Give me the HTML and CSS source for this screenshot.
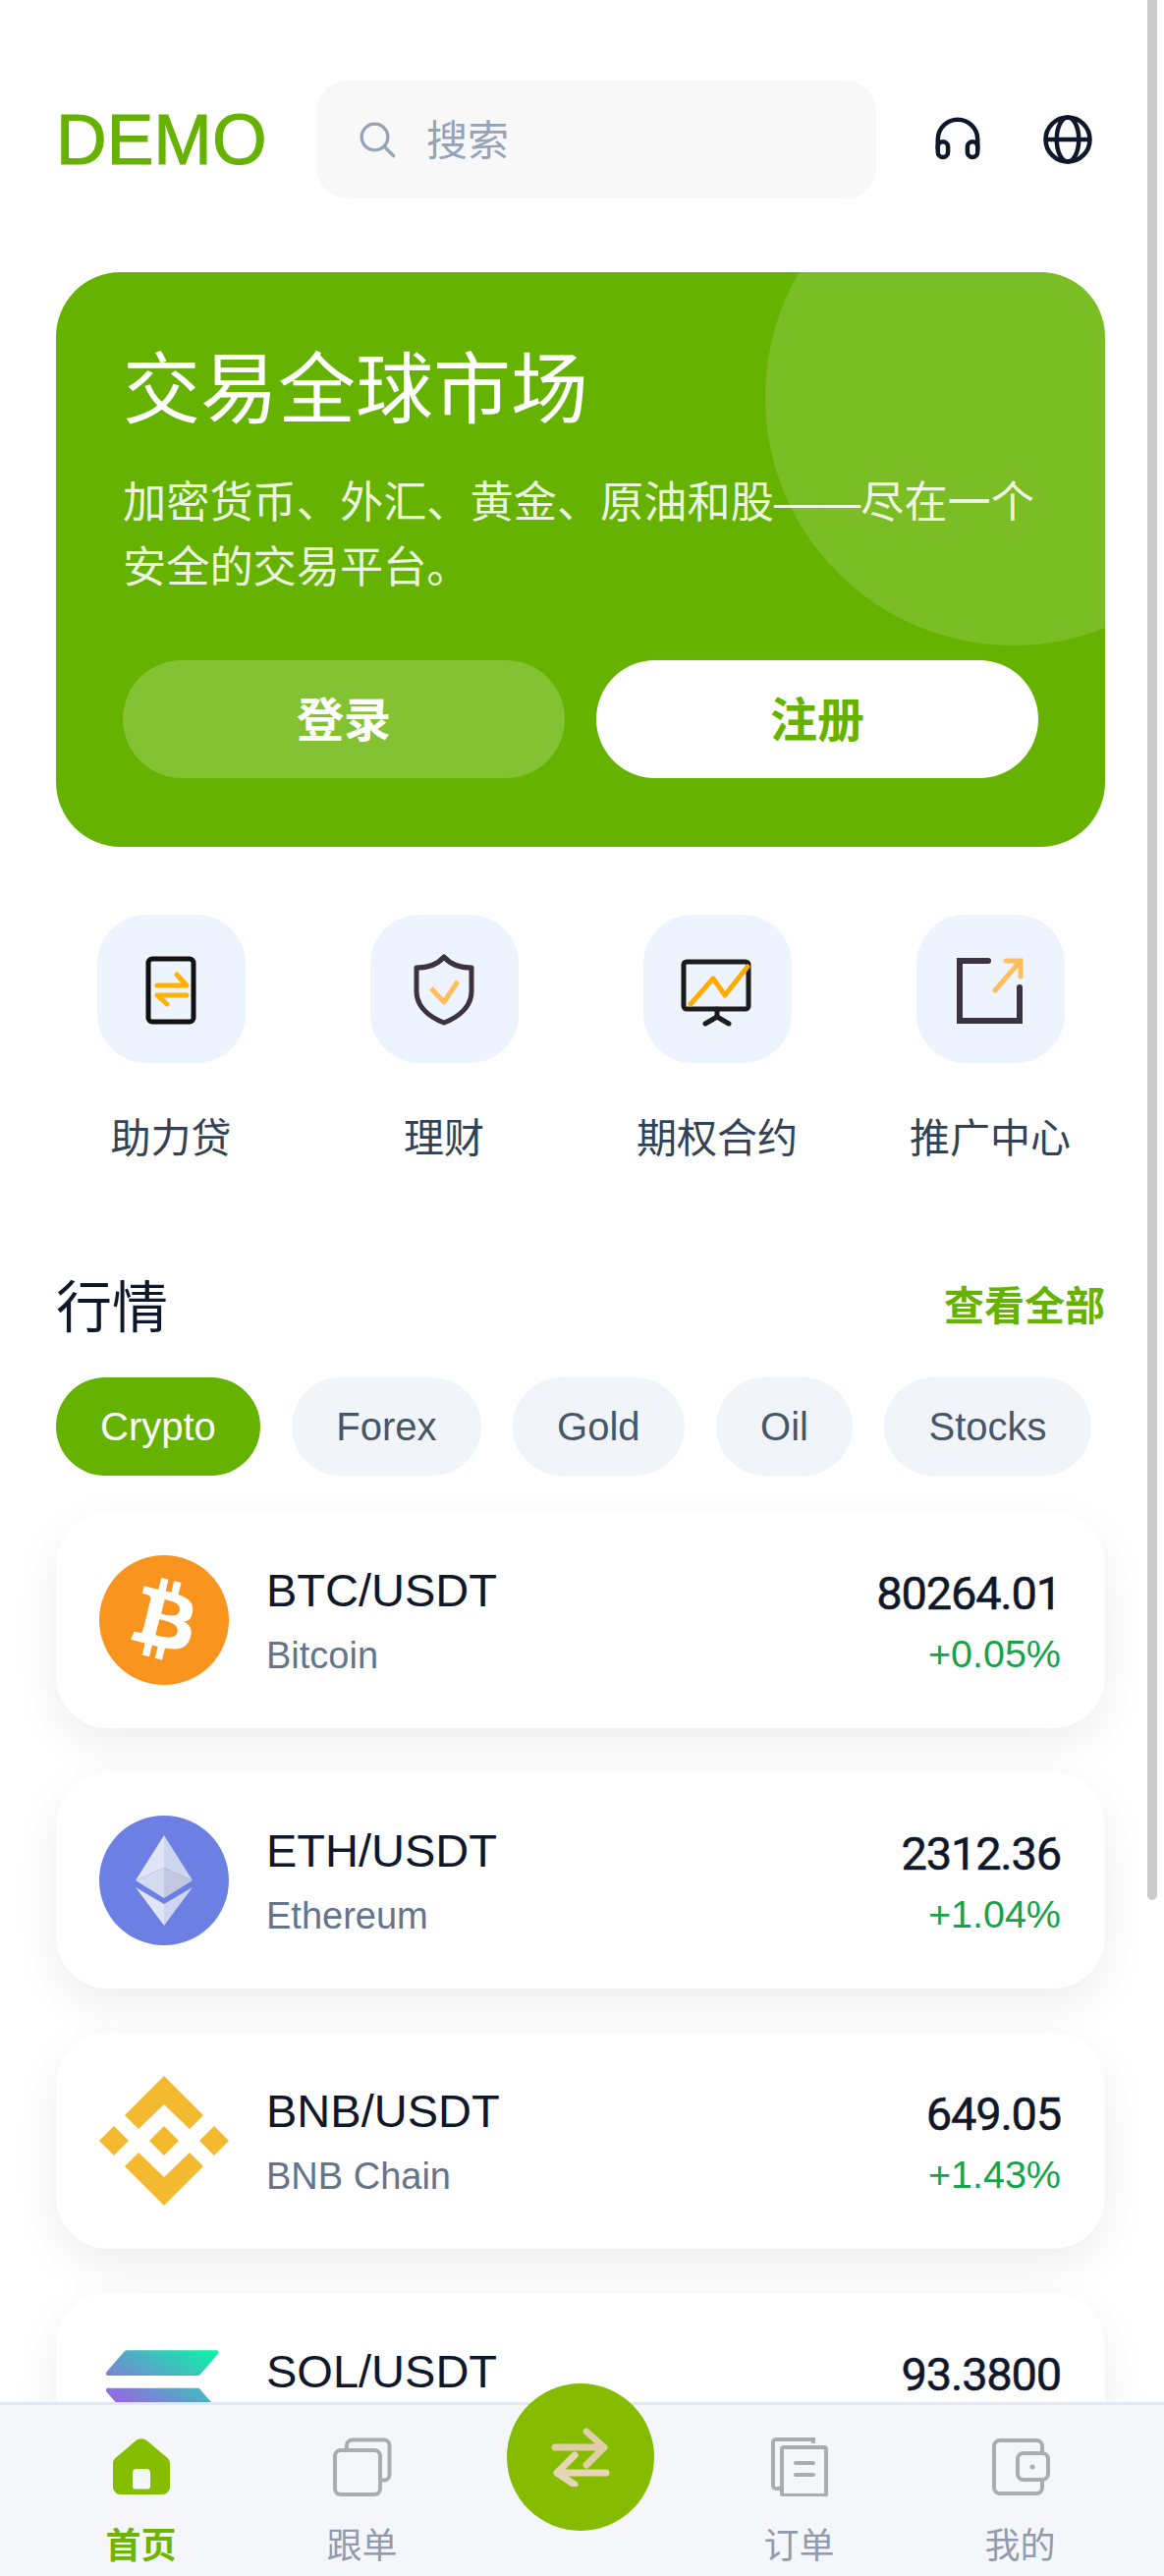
FILE: index.html
```html
<!DOCTYPE html>
<html lang="zh-CN">
<head>
    <meta charset="UTF-8">
    <meta name="viewport" content="width=device-width, initial-scale=1.0">
    <title>DEMO</title>
    <link rel="stylesheet" href="styles.css">
</head>
<body>
    <div class="page">
        <!-- Header -->
        <header class="top-bar">
            <div class="logo">DEMO</div>
            <div class="search-box">
                <svg class="search-icon" viewBox="0 0 24 24" fill="none" stroke="#94a3b8" stroke-width="2" stroke-linecap="round"><circle cx="10.5" cy="10.5" r="8"/><path d="M16.5 16.5L22 22"/></svg>
                <span>搜索</span>
            </div>
            <svg class="top-icon" viewBox="0 0 24 24" fill="none" stroke="#0f172a" stroke-width="2" stroke-linecap="round"><path d="M3 16v-4a9 9 0 0 1 18 0v4"/><rect x="3" y="13" width="4.6" height="7" rx="2.3"/><rect x="16.4" y="13" width="4.6" height="7" rx="2.3"/></svg>
            <svg class="top-icon" viewBox="0 0 24 24" fill="none" stroke="#0f172a" stroke-width="2"><circle cx="12" cy="12" r="10"/><ellipse cx="12" cy="12" rx="5" ry="10"/><path d="M2 12h20"/></svg>
        </header>

        <!-- Hero banner -->
        <section class="hero">
            <div class="hero-circle"></div>
            <h1 class="hero-title">交易全球市场</h1>
            <p class="hero-text">加密货币、外汇、黄金、原油和股——尽在一个安全的交易平台。</p>
            <div class="hero-buttons">
                <div class="hero-button login">登录</div>
                <div class="hero-button register">注册</div>
            </div>
        </section>

        <!-- Shortcuts -->
        <section class="shortcuts">
            <div class="shortcut">
                <div class="shortcut-icon">
                    <svg viewBox="0 0 80 80" fill="none" stroke-width="5" stroke-linecap="round" stroke-linejoin="round"><rect x="17" y="9" width="46" height="64" rx="4" stroke="#111"/><path d="M26 36h30L46 25M56 46H26l10 9" stroke="#ffb300"/></svg>
                </div>
                <div class="shortcut-label">助力贷</div>
            </div>
            <div class="shortcut">
                <div class="shortcut-icon">
                    <svg viewBox="0 0 80 80" fill="none" stroke-width="5" stroke-linejoin="round"><path d="M40 7c6 7 16 11 28 11v24c0 15-12 26-28 32C24 68 12 57 12 42V18c12 0 22-4 28-11z" stroke="#3d3242"/><path d="M27 39l13 14 14-21" stroke="#ffbe5c"/></svg>
                </div>
                <div class="shortcut-label">理财</div>
            </div>
            <div class="shortcut">
                <div class="shortcut-icon">
                    <svg viewBox="0 0 80 80" fill="none" stroke-width="5" stroke-linecap="round" stroke-linejoin="round"><rect x="6" y="12" width="66" height="48" rx="3" stroke="#1c1c1c"/><path d="M40 60v8M28 75l12-7 12 7" stroke="#1c1c1c"/><path d="M13 55l23-26 12 17 23-29" stroke="#ffab00"/></svg>
                </div>
                <div class="shortcut-label">期权合约</div>
            </div>
            <div class="shortcut">
                <div class="shortcut-icon">
                    <svg viewBox="0 0 80 80" fill="none" stroke-width="6" stroke-linecap="round"><path d="M38 11H9v61h61V38" stroke="#3d3242"/><path d="M45 41l25-29M56 11h15v16" stroke="#ffbe5c" stroke-width="5"/></svg>
                </div>
                <div class="shortcut-label">推广中心</div>
            </div>
        </section>

        <!-- Markets -->
        <section class="market">
            <div class="market-head">
                <h2 class="market-title">行情</h2>
                <div class="market-more">查看全部</div>
            </div>
            <div class="tabs">
                <div class="tab active">Crypto</div>
                <div class="tab">Forex</div>
                <div class="tab">Gold</div>
                <div class="tab">Oil</div>
                <div class="tab">Stocks</div>
            </div>

            <div class="coin-card">
                <svg class="coin-logo" viewBox="0 0 64 64"><circle cx="32" cy="32" r="32" fill="#f9951e"/><path fill="#fff" d="M46.103,27.444c0.637-4.258-2.605-6.547-7.038-8.074l1.438-5.768l-3.511-0.875l-1.4,5.616c-0.923-0.23-1.871-0.447-2.813-0.662l1.41-5.653l-3.509-0.875l-1.439,5.766c-0.764-0.174-1.514-0.346-2.242-0.527l0.004-0.018l-4.842-1.209l-0.934,3.75c0,0,2.605,0.597,2.55,0.634c1.422,0.355,1.679,1.296,1.636,2.042l-1.638,6.571c0.098,0.025,0.225,0.061,0.365,0.117c-0.117-0.029-0.242-0.061-0.371-0.092l-2.296,9.205c-0.174,0.432-0.615,1.08-1.609,0.834c0.035,0.051-2.552-0.637-2.552-0.637l-1.743,4.019l4.569,1.139c0.85,0.213,1.683,0.436,2.503,0.646l-1.453,5.834l3.507,0.875l1.439-5.772c0.958,0.26,1.888,0.5,2.798,0.726l-1.434,5.745l3.511,0.875l1.453-5.823c5.987,1.133,10.489,0.676,12.384-4.739c1.527-4.36-0.076-6.875-3.226-8.515C44.008,32.894,45.643,31.4,46.103,27.444z M38.58,37.994c-1.085,4.36-8.426,2.003-10.806,1.412l1.928-7.729C32.082,32.27,39.716,33.445,38.58,37.994z M39.666,27.385c-0.99,3.966-7.1,1.951-9.082,1.457l1.748-7.01C34.314,22.326,40.698,23.247,39.666,27.385z"/></svg>
                <div class="coin-info">
                    <div class="coin-pair">BTC/USDT</div>
                    <div class="coin-name">Bitcoin</div>
                </div>
                <div class="coin-quote">
                    <div class="coin-price">80264.01</div>
                    <div class="coin-change">+0.05%</div>
                </div>
            </div>

            <div class="coin-card">
                <svg class="coin-logo" viewBox="0 0 132 132"><circle cx="66" cy="66" r="66" fill="#6b80e2"/><path fill="#dfe4f7" d="M66 20L37 66l29-13z"/><path fill="#ced5ee" d="M66 20l29 46-29-13z"/><path fill="#d4daf0" d="M37 66l29 18V53z"/><path fill="#c1c8e0" d="M95 66L66 84V53z"/><path fill="#dfe4f7" d="M37 73l29 39V90z"/><path fill="#ced5ee" d="M95 73l-29 39V90z"/></svg>
                <div class="coin-info">
                    <div class="coin-pair">ETH/USDT</div>
                    <div class="coin-name">Ethereum</div>
                </div>
                <div class="coin-quote">
                    <div class="coin-price">2312.36</div>
                    <div class="coin-change">+1.04%</div>
                </div>
            </div>

            <div class="coin-card">
                <svg class="coin-logo" viewBox="0 0 132 132" fill="#f3ba2f"><path d="M66 0l40 40-14 14-26-25-26 25-14-14z"/><path d="M66 132l40-40-14-14-26 25-26-25-14 14z"/><path d="M66 51l15 15-15 15-15-15z"/><path d="M15 51l15 15-15 15L0 66z"/><path d="M117 51l15 15-15 15-15-15z"/></svg>
                <div class="coin-info">
                    <div class="coin-pair">BNB/USDT</div>
                    <div class="coin-name">BNB Chain</div>
                </div>
                <div class="coin-quote">
                    <div class="coin-price">649.05</div>
                    <div class="coin-change">+1.43%</div>
                </div>
            </div>

            <div class="coin-card">
                <svg class="coin-logo" viewBox="-24 -43 458 397.7" preserveAspectRatio="none">
                    <defs><linearGradient id="solGrad" gradientUnits="userSpaceOnUse" x1="360.88" y1="-37.46" x2="141.21" y2="383.29"><stop offset="0" stop-color="#00ffa3"/><stop offset="1" stop-color="#dc1fff"/></linearGradient></defs>
                    <path fill="url(#solGrad)" d="M64.6 237.9c2.4-2.4 5.7-3.8 9.2-3.8h317.4c5.8 0 8.7 7 4.6 11.1l-62.7 62.7c-2.4 2.4-5.7 3.8-9.2 3.8H6.5c-5.8 0-8.7-7-4.6-11.1l62.7-62.7z"/>
                    <path fill="url(#solGrad)" d="M64.6 3.8C67.1 1.4 70.4 0 73.8 0h317.4c5.8 0 8.7 7 4.6 11.1l-62.7 62.7c-2.4 2.4-5.7 3.8-9.2 3.8H6.5c-5.8 0-8.7-7-4.6-11.1L64.6 3.8z"/>
                    <path fill="url(#solGrad)" d="M333.1 120.1c-2.4-2.4-5.7-3.8-9.2-3.8H6.5c-5.8 0-8.7 7-4.6 11.1l62.7 62.7c2.4 2.4 5.7 3.8 9.2 3.8h317.4c5.8 0 8.7-7 4.6-11.1l-62.7-62.7z"/>
                </svg>
                <div class="coin-info">
                    <div class="coin-pair">SOL/USDT</div>
                    <div class="coin-name">Solana</div>
                </div>
                <div class="coin-quote">
                    <div class="coin-price">93.3800</div>
                    <div class="coin-change">+0.87%</div>
                </div>
            </div>
        </section>
    </div>

    <div class="scroll-thumb"></div>

    <!-- Bottom nav -->
    <nav class="bottom-nav">
        <div class="nav-item active">
            <svg class="nav-icon" viewBox="0 0 60 60"><path fill="#85bd00" fill-rule="evenodd" d="M24 3.500c3.500-3 8.500-3 12 0l20 17c2 1.700 3 3.500 3 6V50c0 4.500-3.500 8-8 8H9c-4.500 0-8-3.500-8-8V26.500c0-2.500 1-4.300 3-6zM25 32c-2.500 0-4 1.500-4 4v14c0 1.500 1 2.500 2.500 2.500h13c1.500 0 2.500-1 2.500-2.500V36c0-2.500-1.500-4-4-4z"/></svg>
            <span>首页</span>
        </div>
        <div class="nav-item">
            <svg class="nav-icon" viewBox="0 0 60 60" fill="none" stroke="#aaacaf" stroke-width="4"><rect x="2" y="13" width="46" height="45" rx="6"/><path d="M14 12V8c0-3 2.500-5.500 5.500-5.500H52c3 0 5.500 2.500 5.500 5.500v30c0 3-2.500 5.500-5.500 5.500h-4"/></svg>
            <span>跟单</span>
        </div>
        <div class="nav-center">
            <div class="trade-button">
                <svg viewBox="0 0 60 60" fill="none" stroke-width="7" stroke-linecap="round" stroke-linejoin="round"><path d="M4 20h50M36 4l18 16-18 18" stroke="#dfcea8"/><path d="M56 46H6M24 28L6 46l18 12" stroke="#e6d6b7"/></svg>
            </div>
        </div>
        <div class="nav-item">
            <svg class="nav-icon" viewBox="0 0 60 60" fill="none" stroke="#aaacaf" stroke-width="4"><path d="M44 6V2H6a3 3 0 0 0-3 3v44a3 3 0 0 0 3 3h5"/><rect x="12" y="10" width="45" height="49" rx="2"/><path d="M26 26h18M26 38h18" stroke-linecap="round"/></svg>
            <span>订单</span>
        </div>
        <div class="nav-item">
            <svg class="nav-icon" viewBox="0 0 60 60" fill="none" stroke="#aaacaf" stroke-width="4"><path d="M52 16V9a6 6 0 0 0-6-6H9a6 6 0 0 0-6 6v42a6 6 0 0 0 6 6h37a6 6 0 0 0 6-6v-8"/><rect x="27" y="16" width="31" height="27" rx="6"/><circle cx="42" cy="30" r="2.500" fill="#aaacaf" stroke="none"/></svg>
            <span>我的</span>
        </div>
    </nav>
</body>
</html>
```

FILE: styles.css
```css
* {
    box-sizing: border-box;
}

body {
    font-family: "Liberation Sans", "Noto Sans CJK SC", sans-serif;
    background-color: #fff;
    margin: 0;
    padding: 0;
    width: 1185px;
    height: 2622px;
    position: relative;
    overflow: hidden;
}

h1, h2, p {
    margin: 0;
    font-weight: normal;
}

.page {
    width: 1168px;
    height: 2622px;
    overflow: hidden;
    padding: 82px 43px 0 57px;
}

/* header */
.top-bar {
    display: flex;
    align-items: center;
    height: 120px;
}

.logo {
    width: 265px;
    font-size: 71.5px;
    color: #65b300;
    -webkit-text-stroke: 1px #65b300;
}

.search-box {
    display: flex;
    align-items: center;
    width: 570px;
    height: 120px;
    padding-left: 42px;
    margin-right: 56px;
    background-color: #f8f8f8;
    border-radius: 32px;
    font-size: 42px;
    color: #94a3b8;
}

.search-box span {
    padding-bottom: 6px;
}

.search-icon {
    width: 40px;
    height: 40px;
    margin-right: 30px;
}

.top-icon {
    width: 54px;
    height: 54px;
    margin-right: 58px;
}

.top-icon:last-child {
    margin-right: 0;
}

/* hero */
.hero {
    position: relative;
    overflow: hidden;
    height: 585px;
    margin-top: 75px;
    padding: 71px 68px 0;
    background-color: #65b300;
    border-radius: 66px;
    color: #fff;
}

.hero-circle {
    position: absolute;
    left: 722px;
    top: -125px;
    width: 505px;
    height: 505px;
    border-radius: 50%;
    background-color: rgba(255, 255, 255, 0.14);
}

.hero-title {
    position: relative;
    font-size: 79px;
    line-height: 100px;
}

.hero-text {
    position: relative;
    margin-top: 31px;
    font-size: 44.2px;
    line-height: 66px;
    color: rgba(255, 255, 255, 0.9);
}

.hero-buttons {
    position: relative;
    display: flex;
    gap: 32px;
    margin-top: 61px;
}

.hero-button {
    width: 450px;
    height: 120px;
    border-radius: 60px;
    font-size: 48px;
    font-weight: bold;
    line-height: 124px;
    text-align: center;
}

.login {
    background-color: rgba(255, 255, 255, 0.2);
    color: #fff;
}

.register {
    background-color: #fff;
    color: #65b300;
}

/* shortcuts */
.shortcuts {
    display: flex;
    justify-content: space-between;
    margin-top: 69px;
}

.shortcut {
    width: 234px;
    text-align: center;
}

.shortcut-icon {
    display: flex;
    align-items: center;
    justify-content: center;
    width: 151px;
    height: 151px;
    margin: 0 auto;
    background-color: #edf3ff;
    border-radius: 50px;
}

.shortcut-icon svg {
    width: 80px;
    height: 80px;
}

.shortcut-label {
    margin-top: 52px;
    font-size: 41px;
    line-height: 50px;
    color: #334155;
}

/* market list */
.market {
    margin-top: 112px;
}

.market-head {
    display: flex;
    align-items: center;
    justify-content: space-between;
}

.market-title {
    font-size: 57px;
    line-height: 70px;
    color: #0f172a;
}

.market-more {
    padding-bottom: 10px;
    font-size: 41px;
    font-weight: bold;
    color: #65b300;
}

.tabs {
    display: flex;
    gap: 32.5px;
    margin-top: 36px;
}

.tab {
    height: 100px;
    padding: 0 45px;
    border-radius: 50px;
    background-color: #f1f5f9;
    font-size: 40px;
    line-height: 100px;
    color: #475569;
}

.tab.active {
    background-color: #65b300;
    color: #fff;
}

.coin-card {
    display: flex;
    align-items: center;
    height: 220px;
    margin-top: 45px;
    padding: 0 45px 0 44px;
    background-color: #fff;
    border-radius: 53px;
    box-shadow: 0 16px 48px rgba(0, 0, 0, 0.07);
}

.tabs + .coin-card {
    margin-top: 37px;
}

.coin-logo {
    width: 132px;
    height: 132px;
    margin-right: 38px;
    flex-shrink: 0;
}

.coin-info {
    flex: 1;
}

.coin-pair {
    font-size: 47px;
    line-height: 60px;
    color: #0f172a;
}

.coin-name {
    margin-top: 11px;
    font-size: 38px;
    line-height: 50px;
    color: #64748b;
}

.coin-quote {
    padding-top: 1px;
    text-align: right;
}

.coin-price {
    font-family: "Roboto", "Liberation Sans", sans-serif;
    font-size: 47px;
    line-height: 60px;
    letter-spacing: -1.2px;
    color: #0f172a;
    -webkit-text-stroke: 0.5px #0f172a;
}

.coin-change {
    margin-top: 6px;
    font-size: 39.5px;
    line-height: 50px;
    color: #16a34a;
}

.scroll-thumb {
    position: absolute;
    left: 1168px;
    top: 0;
    width: 10px;
    height: 1934px;
    background-color: #cbcbcb;
    border-radius: 0 0 5px 5px;
}

/* bottom nav */
.bottom-nav {
    position: absolute;
    left: 0;
    bottom: 0;
    display: grid;
    grid-template-columns: 225px 225px 220px 225px 225px;
    width: 1185px;
    height: 177px;
    padding: 33px 31px 0;
    background-color: #f4f6fa;
    border-top: 3px solid #e2e8f0;
}

.nav-item {
    text-align: center;
    font-size: 36px;
    line-height: 44px;
    color: #919bad;
}

.nav-item span {
    display: block;
    margin-top: 29px;
}

.nav-item.active {
    font-weight: bold;
    color: #6cb500;
}

.nav-icon {
    display: block;
    width: 60px;
    height: 60px;
    margin: 0 auto;
}

.nav-center {
    position: relative;
}

.trade-button {
    position: absolute;
    left: 35px;
    top: -55px;
    display: flex;
    align-items: center;
    justify-content: center;
    width: 150px;
    height: 150px;
    border-radius: 50%;
    background-color: #86bc00;
}

.trade-button svg {
    width: 60px;
    height: 60px;
}
```
